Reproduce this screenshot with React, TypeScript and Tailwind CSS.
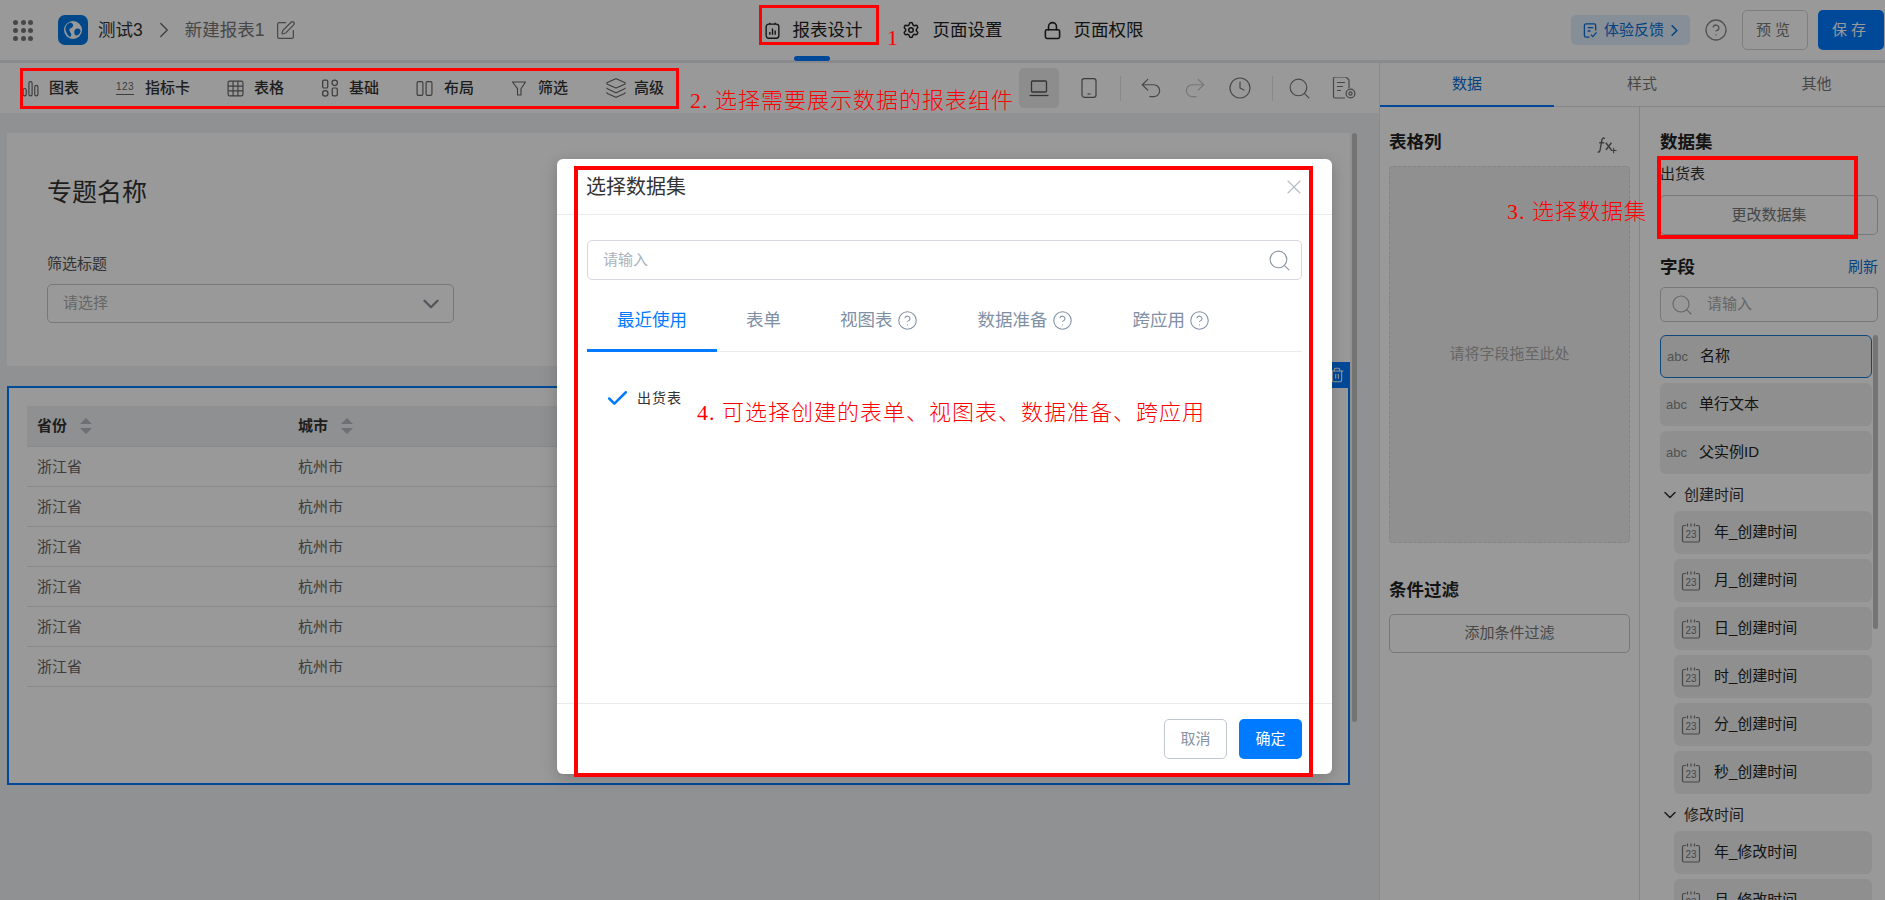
import { CircleHelp, ChevronDown, ChevronRight, Clock, Layers, Lock, Redo2, Search, Settings, SquarePen, Trash2, Undo2, X, Check } from 'lucide-react';

const rows = [0, 1, 2, 3, 4, 5];
const createFields = ['年_创建时间', '月_创建时间', '日_创建时间', '时_创建时间', '分_创建时间', '秒_创建时间'];
const modifyFields = ['年_修改时间', '月_修改时间'];

function ChartIcon({ className }: { className?: string }) {
  return (
    <svg viewBox="0 0 16 16" className={className} fill="none" stroke="currentColor" strokeWidth="1.1">
      <rect x="1" y="8" width="3" height="7" rx="1.5" />
      <rect x="6.5" y="1.5" width="3" height="13.5" rx="1.5" />
      <rect x="12" y="5" width="3" height="10" rx="1.5" />
    </svg>
  );
}

function GridIcon({ className }: { className?: string }) {
  return (
    <svg viewBox="0 0 16 16" className={className} fill="none" stroke="currentColor" strokeWidth="1.1">
      <rect x="1" y="1" width="14" height="14" rx="1.5" />
      <path d="M1 5.7h14M1 10.3h14M5.7 1v14M10.3 1v14" />
    </svg>
  );
}

function BasicIcon({ className }: { className?: string }) {
  return (
    <svg viewBox="0 0 16 16" className={className} fill="none" stroke="currentColor" strokeWidth="1.1">
      <rect x="1.5" y="1" width="4.5" height="7" rx="1.2" />
      <circle cx="3.8" cy="12.8" r="2.4" />
      <circle cx="12.2" cy="3.4" r="2.4" />
      <rect x="10" y="8" width="4.5" height="7" rx="1.2" />
    </svg>
  );
}

function ColumnsIcon({ className }: { className?: string }) {
  return (
    <svg viewBox="0 0 16 16" className={className} fill="none" stroke="currentColor" strokeWidth="1.1">
      <rect x="1" y="1.5" width="5.5" height="13" rx="1.3" />
      <rect x="9.5" y="1.5" width="5.5" height="13" rx="1.3" />
    </svg>
  );
}

function FunnelIcon({ className }: { className?: string }) {
  return (
    <svg viewBox="0 0 16 16" className={className} fill="none" stroke="currentColor" strokeWidth="1.1" strokeLinejoin="round">
      <path d="M1.5 1.5h13L10 8.2v6.3H6.5V8.2z" />
    </svg>
  );
}

function NumberIcon() {
  return (
    <span className="flex h-[18px] w-[18px] flex-col items-center justify-center leading-none text-[#666]">
      <span className="text-[10px] tracking-[0.5px]">123</span>
      <span className="mt-[2px] h-px w-[18px] bg-[#666]" />
    </span>
  );
}

function ReportIcon({ className }: { className?: string }) {
  return (
    <svg viewBox="0 0 14 16" className={className} fill="none" stroke="currentColor" strokeWidth="1.3">
      <rect x="1" y="2" width="12" height="13.3" rx="2.5" />
      <path d="M4.5 2V.6M9.5 2V.6M4.5 12V9.5M7 12V6M9.5 12V8" />
    </svg>
  );
}

function LaptopIcon({ className }: { className?: string }) {
  return (
    <svg viewBox="0 0 20 18" className={className} fill="none" stroke="currentColor" strokeWidth="1.3">
      <rect x="2.5" y="2" width="15" height="11" rx="1" />
      <path d="M.5 16.5h19" />
    </svg>
  );
}

function PhoneIcon({ className }: { className?: string }) {
  return (
    <svg viewBox="0 0 16 20" className={className} fill="none" stroke="currentColor" strokeWidth="1.2">
      <rect x="1" y=".7" width="14" height="18.6" rx="2.2" />
      <path d="M6.5 16h3" />
    </svg>
  );
}

function DocGearIcon({ className }: { className?: string }) {
  return (
    <svg viewBox="0 0 25 22" className={className} fill="none" stroke="currentColor" strokeWidth="1.2">
      <path d="M13 21H3a1.5 1.5 0 0 1-1.5-1.5v-18A1.5 1.5 0 0 1 3 0h11l3 3v8" />
      <path d="M5 5.5h8M5 9.5h6M5 13.5h4" />
      <circle cx="18.5" cy="16.5" r="4.4" />
      <circle cx="18.5" cy="16.5" r="1.6" />
    </svg>
  );
}

function FeedbackIcon({ className }: { className?: string }) {
  return (
    <svg viewBox="0 0 16 16" className={className} fill="none" stroke="currentColor" strokeWidth="1.4">
      <path d="M7 15H3a1.5 1.5 0 0 1-1.5-1.5v-11A1.5 1.5 0 0 1 3 1h9a1.5 1.5 0 0 1 1.5 1.5V8" />
      <path d="M5 5h6M5 8.5h3M8.5 12.5l2 2 4-4.5" />
    </svg>
  );
}

function FxIcon({ className }: { className?: string }) {
  return (
    <svg viewBox="0 0 18 18" className={className} fill="none" stroke="currentColor" strokeWidth="1.3">
      <path d="M7 3.2C5.5 2.2 4.6 3 4.3 4.8L2.8 13.5c-.3 1.6-1.2 2.2-2.2 1.6M2 7h4.6M8 7l5 6.5M13 7l-5 6.5" />
      <path d="M15 11.5v5M12.6 14h5" strokeWidth="1" />
    </svg>
  );
}

function CalendarIcon() {
  return (
    <svg viewBox="0 0 20 20" className="h-5 w-5 shrink-0 text-[#777]" fill="none" stroke="currentColor" strokeWidth="1.2">
      <path d="M5 2.5H3a1.5 1.5 0 0 0-1.5 1.5v13.5A1.5 1.5 0 0 0 3 19h14a1.5 1.5 0 0 0 1.5-1.5V4A1.5 1.5 0 0 0 17 2.5h-2" />
      <path d="M6.5 .5v3M10 .5v3M13.5 .5v3" />
      <text x="10" y="15" textAnchor="middle" fontSize="10" fill="currentColor" stroke="none" fontFamily="Liberation Sans">23</text>
    </svg>
  );
}

function SortIcon() {
  return (
    <svg viewBox="0 0 12 16" className="h-4 w-3 text-[#b4b9c1]" fill="currentColor">
      <path d="M6 0l6 6H0zM6 16L0 10h12z" />
    </svg>
  );
}

function LogoIcon() {
  return (
    <div className="flex h-[30px] w-[30px] items-center justify-center rounded-[7px] bg-[#0078e6]">
      <svg viewBox="0 0 20 20" className="h-5 w-5">
        <circle cx="10" cy="10" r="9" fill="#fff" />
        <path d="M7 2.5c3 .5 4 2.5 2.5 4.5S6 8 6.5 10.5 9 13 8 16 3 13 2.5 10 4 3.5 7 2.5zM13 9c2.5-1 4.5 0 4.5 2S15 16 13 15.5 10.5 10 13 9z" fill="#0078e6" />
      </svg>
    </div>
  );
}

function ToolItem({ icon, label, gap = 'gap-[11px]' }: { icon: React.ReactNode; label: string; gap?: string }) {
  return (
    <div className={`flex items-center ${gap}`}>
      {icon}
      <span className="text-[15px] font-medium text-[#333]">{label}</span>
    </div>
  );
}

function FieldItem({ name, active }: { name: string; active?: boolean }) {
  return (
    <div
      className={`mb-[5px] flex h-[43px] w-[212px] items-center rounded-[6px] pl-[6px] ${
        active ? 'border border-[#1677d2] bg-[#efefef]' : 'bg-[#efefef]'
      }`}
    >
      <span className="w-[33px] text-[13px] text-[#888]">abc</span>
      <span className="text-[15px] text-[#222]">{name}</span>
    </div>
  );
}

function DateField({ name }: { name: string }) {
  return (
    <div className="mb-[5px] ml-[14px] flex h-[43px] w-[198px] items-center gap-[13px] rounded-[6px] bg-[#efefef] pl-[7px]">
      <CalendarIcon />
      <span className="text-[15px] text-[#222]">{name}</span>
    </div>
  );
}

function GroupLabel({ name }: { name: string }) {
  return (
    <div className="flex h-[32px] items-center gap-[4px] text-[15px] text-[#333]">
      <ChevronDown className="h-[20px] w-[20px]" strokeWidth={1.8} />
      <span>{name}</span>
    </div>
  );
}

function ModalTab({ label, help, className }: { label: string; help?: boolean; className: string }) {
  return (
    <div className={`flex items-center gap-[4px] text-[#7f8fa4] ${className}`}>
      <span className="text-[17.5px]">{label}</span>
      {help && <CircleHelp className="h-[21px] w-[21px]" strokeWidth={1.2} />}
    </div>
  );
}

export default function App() {
  return (
    <div className="relative flex h-[900px] w-full flex-col overflow-hidden bg-white font-['Liberation_Sans','Noto_Sans_CJK_SC',sans-serif]">
      {/* Top bar */}
      <div className="flex h-[63px] shrink-0 items-center border-b-[3px] border-[#e6e8ec] bg-white">
        <div className="grid w-[20px] ml-[13px] grid-cols-3 gap-[3px]">
          {[0, 1, 2, 3, 4, 5, 6, 7, 8].map((i) => (
            <span key={i} className="h-[5px] w-[5px] rounded-full bg-[#777]" />
          ))}
        </div>
        <div className="ml-[25px]">
          <LogoIcon />
        </div>
        <span className="ml-[10px] text-[17.5px] text-[#333]">测试3</span>
        <ChevronRight className="ml-[8px] h-[26px] w-[26px] text-[#666]" strokeWidth={1.2} />
        <span className="ml-[8px] text-[17.5px] text-[#777]">新建报表1</span>
        <SquarePen className="ml-[11px] h-[21px] w-[21px] text-[#777]" strokeWidth={1.4} />

        <div className="relative ml-[469px] flex h-full items-center gap-[12px] text-[#222]">
          <ReportIcon className="h-[17px] w-[15px]" />
          <span className="text-[17.5px]">报表设计</span>
          <span className="absolute bottom-[-1px] left-[29px] h-[5px] w-[36px] rounded-[3px] bg-[#007bff]" />
        </div>
        <div className="ml-[40px] flex items-center gap-[12px] text-[#222]">
          <Settings className="h-[18px] w-[18px]" strokeWidth={2} />
          <span className="text-[17.5px]">页面设置</span>
        </div>
        <div className="ml-[41px] flex items-center gap-[11px] text-[#222]">
          <Lock className="h-[19px] w-[19px]" strokeWidth={2} />
          <span className="text-[17.5px]">页面权限</span>
        </div>

        <div className="ml-auto flex items-center">
          <div className="flex h-[30px] w-[119px] items-center rounded-[5px] bg-[#e0eefc] pl-[12px] text-[#0a6fd8]">
            <FeedbackIcon className="h-[15px] w-[15px]" />
            <span className="ml-[6px] text-[15px]">体验反馈</span>
            <ChevronRight className="ml-[1px] h-[19px] w-[19px]" strokeWidth={2} />
          </div>
          <CircleHelp className="ml-[14px] h-[24px] w-[24px] text-[#888]" strokeWidth={1.3} />
          <div className="ml-[14px] flex h-[40px] w-[66px] items-center justify-center rounded-[5px] border border-[#cfd3d9] text-[15px] tracking-[4px] text-[#777]">
            预览
          </div>
          <div className="ml-[10px] mr-px flex h-[40px] w-[66px] items-center justify-center rounded-[5px] bg-[#007bff] text-[15px] tracking-[4px] text-white">
            保存
          </div>
        </div>
      </div>

      <div className="flex min-h-0 flex-1">
        {/* Designer column */}
        <div className="flex w-[1379px] shrink-0 flex-col">
          <div className="flex h-[50px] shrink-0 items-center bg-white pl-[22px]">
            <div className="flex items-center gap-[37px]">
              <ToolItem icon={<ChartIcon className="h-[17px] w-[17px] text-[#666]" />} label="图表" gap="gap-[10px]" />
              <ToolItem icon={<NumberIcon />} label="指标卡" />
              <ToolItem icon={<GridIcon className="h-[17px] w-[17px] text-[#666]" />} label="表格" gap="gap-[10px]" />
              <ToolItem icon={<BasicIcon className="h-[18px] w-[18px] text-[#666]" />} label="基础" gap="gap-[10px]" />
              <ToolItem icon={<ColumnsIcon className="h-[17px] w-[17px] text-[#666]" />} label="布局" />
              <ToolItem icon={<FunnelIcon className="h-[17px] w-[16px] text-[#666]" />} label="筛选" />
              <ToolItem icon={<Layers className="h-[22px] w-[22px] text-[#666]" strokeWidth={1.2} />} label="高级" gap="gap-[7px]" />
            </div>
            <div className="ml-[355px] flex h-[40px] w-[40px] items-center justify-center rounded-[5px] bg-[#ececec]">
              <LaptopIcon className="h-[18px] w-[20px] text-[#555]" />
            </div>
            <PhoneIcon className="ml-[22px] h-[20px] w-[16px] text-[#666]" />
            <span className="ml-[23px] h-[25px] w-px bg-[#e4e4e4]" />
            <Undo2 className="ml-[17px] h-[26px] w-[26px] text-[#777]" strokeWidth={1.1} />
            <Redo2 className="ml-[18px] h-[26px] w-[26px] text-[#c6c6c6]" strokeWidth={1.1} />
            <Clock className="ml-[20px] h-[24px] w-[24px] text-[#777]" strokeWidth={1.2} />
            <span className="ml-[20px] h-[25px] w-px bg-[#e4e4e4]" />
            <Search className="ml-[14px] h-[25px] w-[25px] text-[#777]" strokeWidth={1.1} />
            <DocGearIcon className="ml-[20px] h-[22px] w-[25px] text-[#777]" />
          </div>

          <div className="relative min-h-0 flex-1 bg-[#f0f2f5] pl-[7px] pr-[29px] pt-[20px]">
            <div className="h-[233px] bg-white pl-[40px] pt-[39px]">
              <div className="text-[25px] leading-[40px] text-[#333]">专题名称</div>
              <div className="mt-[42px] text-[15px] leading-[20px] text-[#555]">筛选标题</div>
              <div className="mt-[10px] flex h-[39px] w-[407px] items-center justify-between rounded-[5px] border border-[#c4c8ce] pl-[15px] pr-[9px]">
                <span className="text-[15px] text-[#aaa]">请选择</span>
                <ChevronDown className="h-[26px] w-[26px] text-[#8a9099]" strokeWidth={2.2} />
              </div>
            </div>

            <div className="relative mt-[20px] h-[399px] border-2 border-[#007bff] bg-white px-[18px] pt-[18px]">
              <div className="absolute -top-[26px] right-[-2px] flex h-[26px] w-[26px] items-center justify-center bg-[#007bff]">
                <Trash2 className="h-[16px] w-[16px] text-white" strokeWidth={1.6} />
              </div>
              <div className="flex h-[41px] items-center border-b border-[#e5e5e5] bg-[#eef0f2] text-[15px] font-bold text-[#333]">
                <div className="flex w-[261px] items-center gap-[13px] pl-[10px]">
                  省份 <SortIcon />
                </div>
                <div className="flex items-center gap-[13px] pl-[10px]">
                  城市 <SortIcon />
                </div>
              </div>
              {rows.map((r) => (
                <div key={r} className="flex h-[40px] items-center border-b border-[#e5e5e5] pt-px text-[15px] text-[#666]">
                  <div className="w-[261px] pl-[10px]">浙江省</div>
                  <div className="pl-[10px]">杭州市</div>
                </div>
              ))}
            </div>

            <div className="absolute left-[1352px] top-[20px] h-[589px] w-[5px] rounded-[3px] bg-[#c2c2c2]" />
          </div>
        </div>

        {/* Settings panel */}
        <div className="flex min-w-0 flex-1 flex-col border-l border-[#e6e8ec] bg-white">
          <div className="flex h-[44px] shrink-0 border-b border-[#e2e2e2] text-[15px] text-[#777]">
            <div className="-mb-px flex w-[174px] items-center justify-center border-b-2 border-[#007bff] text-[#0a6fd8]">数据</div>
            <div className="flex w-[176px] items-center justify-center">样式</div>
            <div className="flex flex-1 items-center justify-center pl-[18px]">其他</div>
          </div>
          <div className="flex min-h-0 flex-1">
            <div className="w-[260px] shrink-0 border-r border-[#dcdcdc] px-[9px] pt-[21px]">
              <div className="flex h-[28px] items-center justify-between pr-[13px]">
                <span className="text-[17.5px] font-bold text-[#222]">表格列</span>
                <FxIcon className="mt-[6px] h-[20px] w-[20px] text-[#666]" />
              </div>
              <div className="mt-[10px] flex h-[377px] items-center justify-center rounded-[4px] border border-dashed border-[#dcdcdc] bg-[#f1f1f1] text-[15px] text-[#aaa]">
                请将字段拖至此处
              </div>
              <div className="mt-[33px] flex h-[28px] items-center text-[17.5px] font-bold text-[#222]">条件过滤</div>
              <div className="mt-[10px] flex h-[39px] items-center justify-center rounded-[5px] border border-[#c4c8ce] text-[15px] text-[#777]">
                添加条件过滤
              </div>
            </div>

            <div className="min-w-0 flex-1 pl-[20px] pr-[7px] pt-[21px]">
              <div className="flex h-[28px] items-center text-[17.5px] font-bold text-[#222]">数据集</div>
              <div className="mt-[8px] h-[20px] text-[15px] leading-[20px] text-[#333]">出货表</div>
              <div className="mt-[11px] flex h-[40px] items-center justify-center rounded-[5px] border border-[#c4c8ce] text-[15px] text-[#777]">
                更改数据集
              </div>
              <div className="mt-[18px] flex h-[28px] items-center justify-between">
                <span className="text-[17.5px] font-bold text-[#222]">字段</span>
                <span className="text-[15px] font-normal text-[#0a6fd8]">刷新</span>
              </div>
              <div className="mt-[6px] flex h-[35px] items-center rounded-[5px] border border-[#c4c8ce] pl-[9px]">
                <Search className="h-[24px] w-[24px] text-[#aaa]" strokeWidth={1.1} />
                <span className="ml-[13px] text-[15px] text-[#aaa]">请输入</span>
              </div>
              <div className="relative mt-[13px]">
                <FieldItem name="名称" active />
                <FieldItem name="单行文本" />
                <FieldItem name="父实例ID" />
                <GroupLabel name="创建时间" />
                {createFields.map((f) => (
                  <DateField key={f} name={f} />
                ))}
                <GroupLabel name="修改时间" />
                {modifyFields.map((f) => (
                  <DateField key={f} name={f} />
                ))}
                <div className="absolute right-0 top-0 h-[294px] w-[5px] rounded-[3px] bg-[#c2c2c2]" />
              </div>
            </div>
          </div>
        </div>
      </div>

      {/* Dimmed layer */}
      <div className="absolute inset-0 bg-black/40" />

      {/* Dataset dialog */}
      <div className="absolute left-[557px] top-[159px] flex h-[615px] w-[775px] flex-col rounded-[6px] bg-white shadow-[0_4px_16px_rgba(0,0,0,0.2)]">
        <div className="flex h-[56px] shrink-0 items-center justify-between border-b border-[#e8eaed] pl-[29px] pr-[26px]">
          <span className="text-[20px] text-[#333]">选择数据集</span>
          <X className="h-[24px] w-[24px] text-[#b4bcc8]" strokeWidth={1.1} />
        </div>
        <div className="flex-1 px-[30px] pt-[25px]">
          <div className="flex h-[40px] items-center justify-between rounded-[5px] border border-[#d4d8de] pl-[15px] pr-[9px]">
            <span className="text-[15px] text-[#aab2bd]">请输入</span>
            <Search className="h-[25px] w-[25px] text-[#8f98a5]" strokeWidth={1.1} />
          </div>
          <div className="flex h-[72px] items-center border-b border-[#e8eaed] pt-[10px]">
            <div className="relative flex h-full w-[130px] items-center justify-center text-[17.5px] text-[#007bff]">
              最近使用
              <span className="absolute -bottom-px left-0 h-[3px] w-[130px] bg-[#007bff]" />
            </div>
            <ModalTab label="表单" className="ml-[29px]" />
            <ModalTab label="视图表" help className="ml-[59px]" />
            <ModalTab label="数据准备" help className="ml-[60px]" />
            <ModalTab label="跨应用" help className="ml-[60px]" />
          </div>
          <div className="mt-[34px] flex items-center pl-[18px]">
            <Check className="h-[25px] w-[25px] text-[#007bff]" strokeWidth={2.4} />
            <span className="ml-[7px] text-[14px] tracking-[1px] text-[#333]">出货表</span>
          </div>
        </div>
        <div className="flex h-[71px] shrink-0 items-start justify-end gap-[12px] border-t border-[#e8eaed] pr-[30px] pt-[15px]">
          <div className="flex h-[40px] w-[63px] items-center justify-center rounded-[5px] border border-[#c0c7d1] text-[15px] text-[#8792a2]">取消</div>
          <div className="flex h-[40px] w-[63px] items-center justify-center rounded-[5px] bg-[#007bff] text-[15px] text-white">确定</div>
        </div>
      </div>

      {/* Red annotations on the screenshot */}
      <div className="pointer-events-none absolute left-[759px] top-[5px] h-[40px] w-[120px] border-[3px] border-[#f00]" />
      <div className="pointer-events-none absolute left-[20px] top-[68px] h-[41px] w-[659px] border-[3px] border-[#f00]" />
      <div className="pointer-events-none absolute left-[1657px] top-[156px] h-[83px] w-[201px] border-4 border-[#f00]" />
      <div className="pointer-events-none absolute left-[574px] top-[166px] h-[611px] w-[739px] border-4 border-[#f00]" />
      <span className="absolute left-[887px] top-[25px] text-[22px] leading-[26px] text-[#f00] font-['Liberation_Serif',serif]">1</span>
      <span className="absolute left-[690px] top-[88px] text-[22px] font-light leading-[26px] tracking-[1px] text-[#f00] font-['Liberation_Serif','Noto_Sans_CJK_SC',serif]">2. 选择需要展示数据的报表组件</span>
      <span className="absolute left-[1507px] top-[199px] text-[22px] font-light leading-[26px] tracking-[1px] text-[#f00] font-['Liberation_Serif','Noto_Sans_CJK_SC',serif]">3. 选择数据集</span>
      <span className="absolute left-[697px] top-[400px] text-[22px] font-light leading-[26px] tracking-[1px] text-[#f00] font-['Liberation_Serif','Noto_Sans_CJK_SC',serif]">4. 可选择创建的表单、视图表、数据准备、跨应用</span>
    </div>
  );
}
